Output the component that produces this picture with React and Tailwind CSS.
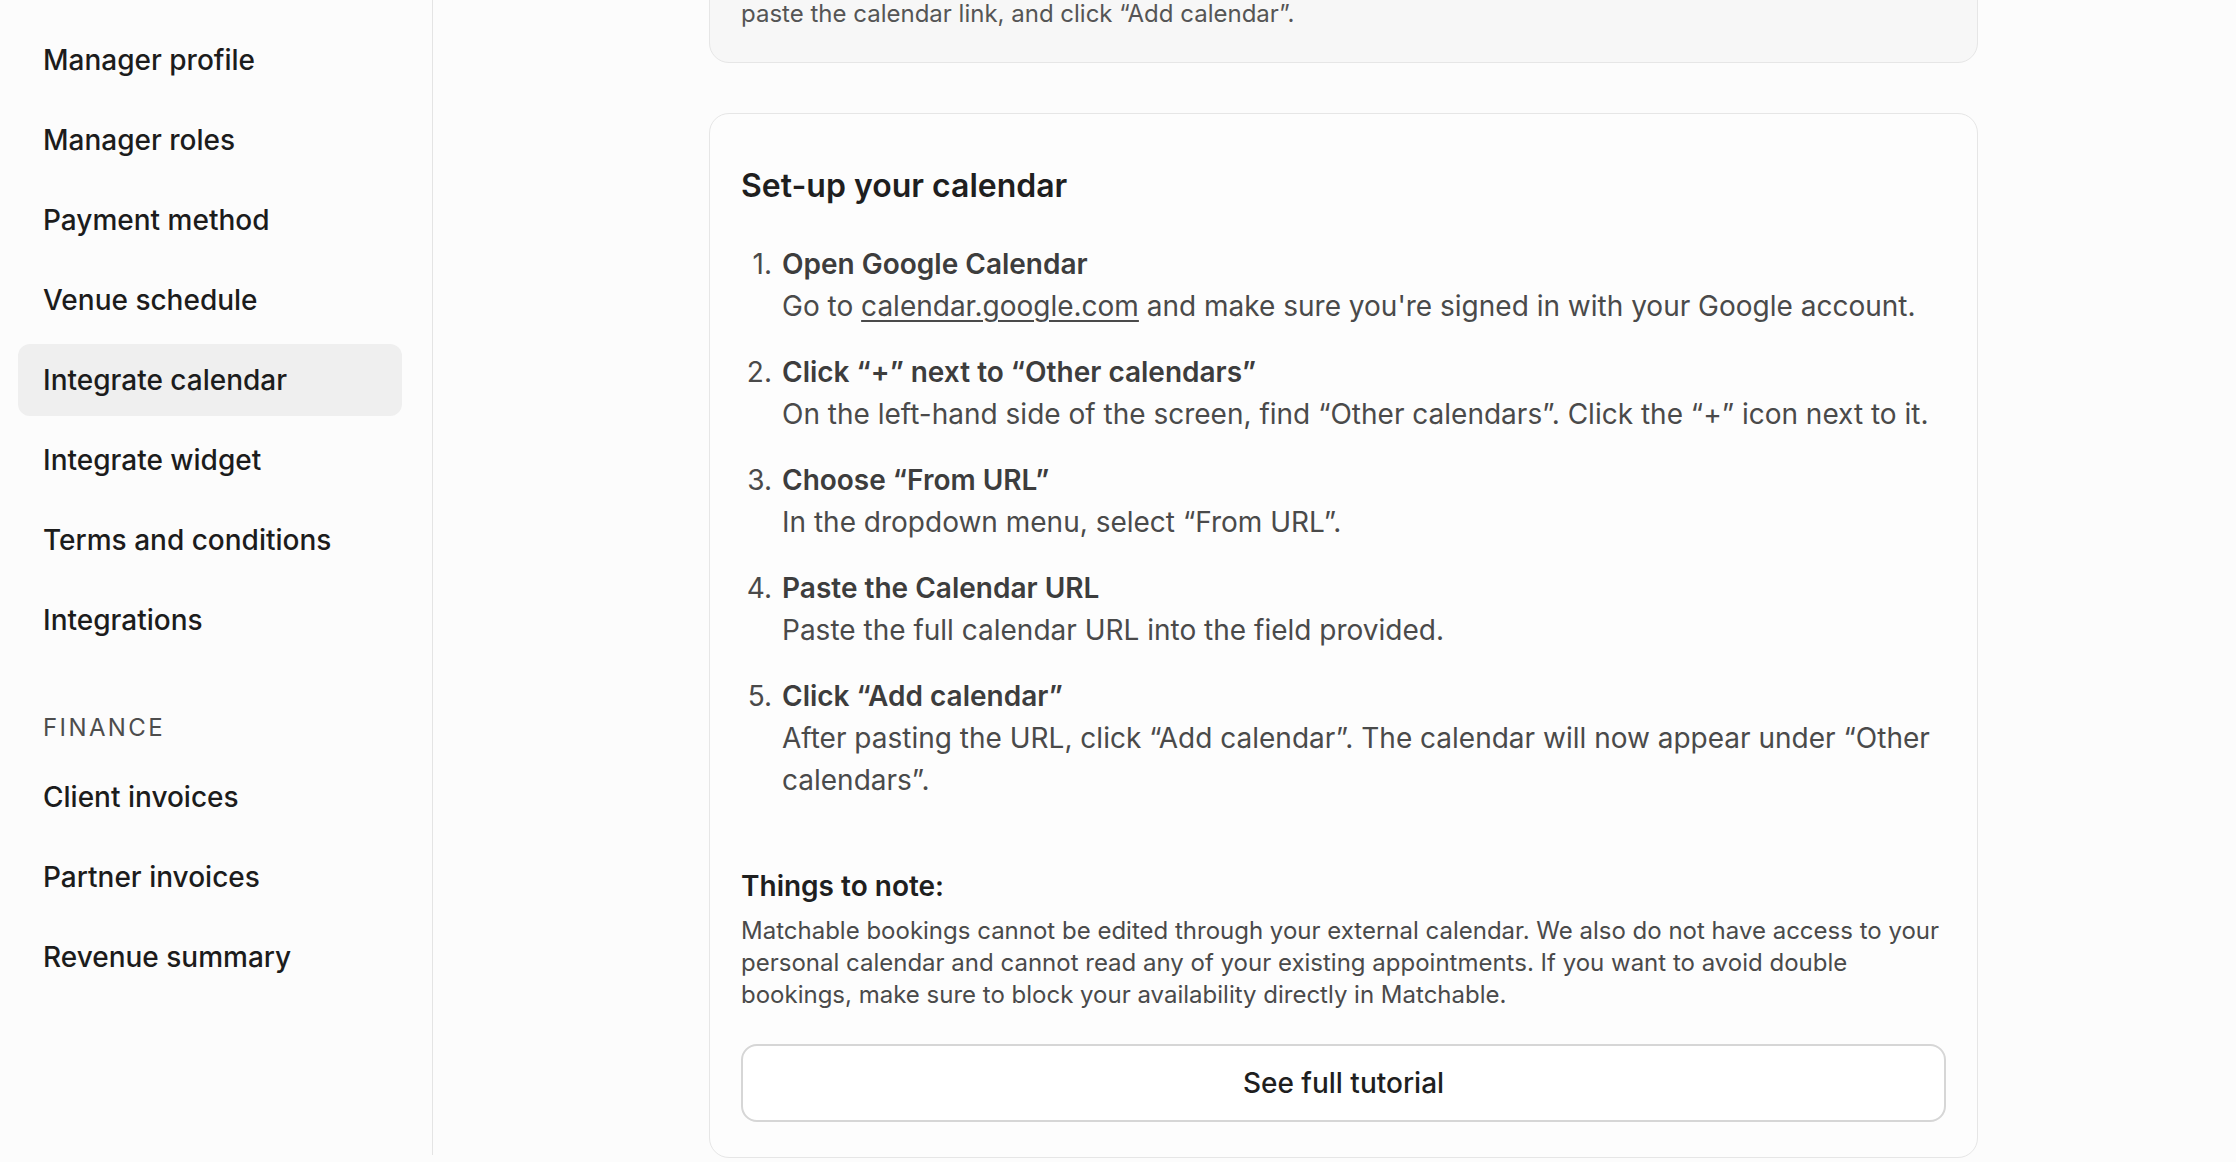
import React from "react";

const group1 = [
  "Manager profile",
  "Manager roles",
  "Payment method",
  "Venue schedule",
  "Integrate calendar",
  "Integrate widget",
  "Terms and conditions",
  "Integrations",
];
const group2 = ["Client invoices", "Partner invoices", "Revenue summary"];

function NavItem({ label, active }) {
  return (
    <div
      className={
        "h-[72px] rounded-[12px] px-[25px] flex items-center text-[28px] font-medium text-[#1c1c1c] " +
        (active ? "bg-[#efefef]" : "")
      }
    >
      {label}
    </div>
  );
}

const steps = [
  {
    title: "Open Google Calendar",
    desc: (
      <>
        Go to <span className="underline underline-offset-[4px] decoration-[1.5px]">calendar.google.com</span> and make sure you're signed in with your Google account.
      </>
    ),
  },
  {
    title: "Click “+” next to “Other calendars”",
    desc: "On the left-hand side of the screen, find “Other calendars”. Click the “+” icon next to it.",
  },
  { title: "Choose “From URL”", desc: "In the dropdown menu, select “From URL”." },
  { title: "Paste the Calendar URL", desc: "Paste the full calendar URL into the field provided." },
  {
    title: "Click “Add calendar”",
    desc: "After pasting the URL, click “Add calendar”. The calendar will now appear under “Other calendars”.",
  },
];

export default function App() {
  return (
    <div className="w-full h-[1162px] bg-[#fcfcfc] overflow-hidden font-['Inter',sans-serif]">
      <div className="flex h-[1155px]">
        <aside className="w-[433px] shrink-0 border-r-[1.5px] border-[#e4e4e4] pl-[18px] pr-[30px] pt-[24px]">
          <div className="flex flex-col gap-[8px]">
            {group1.map((l) => (
              <NavItem key={l} label={l} active={l === "Integrate calendar"} />
            ))}
          </div>
          <div className="mt-[56px] mb-[17px] px-[25px] h-[32px] flex items-center text-[24px] tracking-[0.1em] text-[#4d4d4d]">
            FINANCE
          </div>
          <div className="flex flex-col gap-[8px]">
            {group2.map((l) => (
              <NavItem key={l} label={l} />
            ))}
          </div>
        </aside>
        <main className="flex-1 min-w-0 pl-[276px]">
          <div className="w-[1269px] flex flex-col gap-[50px] mt-[-35px]">
            <div className="rounded-[20px] border-[1.5px] border-[#e6e6e6] bg-[#f7f7f7] px-[31px] pt-[32px] pb-[32px]">
              <p className="text-[24px] leading-[32px] text-[#555555]">
                paste the calendar link, and click “Add calendar”.
              </p>
            </div>
            <div className="rounded-[20px] border-[1.5px] border-[#e6e6e6] bg-[#fdfdfd] px-[31px] pt-[52px] pb-[35px]">
              <h2 className="text-[32px] leading-[40px] font-semibold text-[#1f1f1f]">Set-up your calendar</h2>
              <div className="mt-[37px] flex flex-col gap-[24px]">
                {steps.map((s, i) => (
                  <div key={i} className="flex text-[28px] leading-[42px] text-[#4a4a4a]">
                    <span className="w-[41px] shrink-0 text-right pr-[10px]">{i + 1}.</span>
                    <div className="min-w-0 flex-1">
                      <div className="font-semibold text-[#3d3d3d]">{s.title}</div>
                      <div>{s.desc}</div>
                    </div>
                  </div>
                ))}
              </div>
              <h3 className="mt-[65px] text-[28px] leading-[40px] font-semibold text-[#1f1f1f]">Things to note:</h3>
              <p className="mt-[9px] text-[24px] leading-[32px] text-[#4a4a4a]">
                Matchable bookings cannot be edited through your external calendar. We also do not have access to your personal calendar and cannot read any of your existing appointments. If you want to avoid double bookings, make sure to block your availability directly in Matchable.
              </p>
              <button className="mt-[33px] w-full h-[78px] rounded-[16px] border-2 border-[#d6d6d6] bg-white text-[28px] font-medium text-[#1f1f1f]">
                See full tutorial
              </button>
            </div>
          </div>
        </main>
      </div>
    </div>
  );
}
